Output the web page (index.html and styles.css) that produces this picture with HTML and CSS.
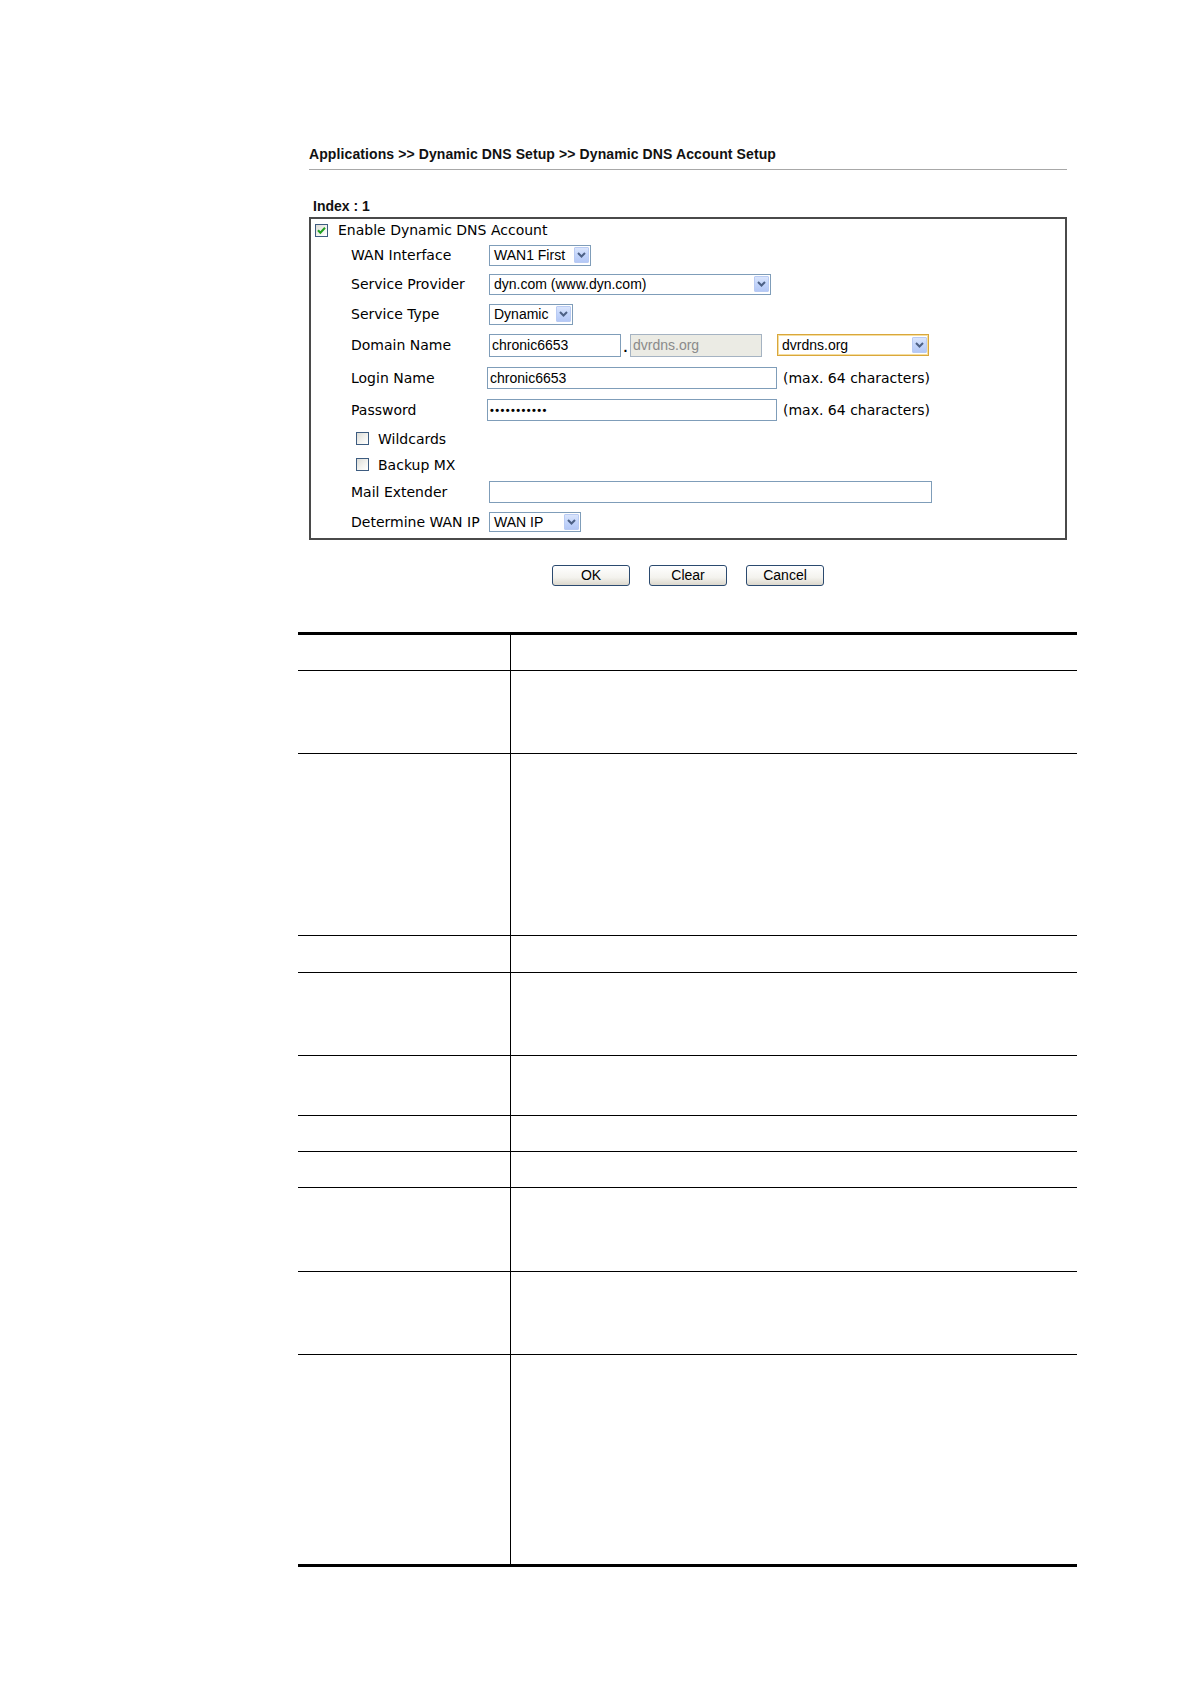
FILE: index.html
```html
<!DOCTYPE html>
<html lang="en">
<head>
<meta charset="utf-8">
<title>Dynamic DNS Account Setup</title>
<link rel="stylesheet" href="styles.css">
</head>
<body>
<div class="page">
  <div class="crumb">Applications &gt;&gt; Dynamic DNS Setup &gt;&gt; Dynamic DNS Account Setup</div>
  <div class="index-title">Index : 1</div>
  <div class="box">
    <div class="frow r1 enable-row">
      <span class="cb checked"><svg viewBox="0 0 13 13" width="13" height="13"><path d="M3 6.2 L5.4 8.8 L10 3.8" fill="none" stroke="#21a121" stroke-width="2"/></svg></span>
      <span class="cb-text">Enable Dynamic DNS Account</span>
    </div>
    <div class="frow r2">
      <span class="flabel">WAN Interface</span>
      <div class="sel w-wan"><span class="sel-text">WAN1 First</span><span class="arrow"><svg viewBox="0 0 15 16" width="15" height="16"><path d="M4 6 L7.5 9.5 L11 6" fill="none" stroke="#4d6185" stroke-width="2"/></svg></span></div>
    </div>
    <div class="frow r3">
      <span class="flabel">Service Provider</span>
      <div class="sel w-sp"><span class="sel-text">dyn.com (www.dyn.com)</span><span class="arrow"><svg viewBox="0 0 15 16" width="15" height="16"><path d="M4 6 L7.5 9.5 L11 6" fill="none" stroke="#4d6185" stroke-width="2"/></svg></span></div>
    </div>
    <div class="frow r4">
      <span class="flabel">Service Type</span>
      <div class="sel w-st"><span class="sel-text">Dynamic</span><span class="arrow"><svg viewBox="0 0 15 16" width="15" height="16"><path d="M4 6 L7.5 9.5 L11 6" fill="none" stroke="#4d6185" stroke-width="2"/></svg></span></div>
    </div>
    <div class="frow r5">
      <span class="flabel">Domain Name</span>
      <div class="inp w-dom1">chronic6653</div>
      <span class="dot">.</span>
      <div class="inp inp-disabled w-dom2">dvrdns.org</div>
      <div class="sel sel-focus w-dom3"><span class="sel-text">dvrdns.org</span><span class="arrow"><svg viewBox="0 0 15 16" width="15" height="16"><path d="M4 6 L7.5 9.5 L11 6" fill="none" stroke="#4d6185" stroke-width="2"/></svg></span></div>
    </div>
    <div class="frow r6">
      <span class="flabel">Login Name</span>
      <div class="inp w-long">chronic6653</div>
      <span class="hint">(max. 64 characters)</span>
    </div>
    <div class="frow r7">
      <span class="flabel">Password</span>
      <div class="inp w-long pw">&#8226;&#8226;&#8226;&#8226;&#8226;&#8226;&#8226;&#8226;&#8226;&#8226;&#8226;</div>
      <span class="hint">(max. 64 characters)</span>
    </div>
    <div class="frow r8 sub-cb">
      <span class="cb"></span>
      <span class="cb-text sub-text">Wildcards</span>
    </div>
    <div class="frow r9 sub-cb">
      <span class="cb"></span>
      <span class="cb-text sub-text">Backup MX</span>
    </div>
    <div class="frow r10">
      <span class="flabel">Mail Extender</span>
      <div class="inp w-mail"></div>
    </div>
    <div class="frow r11">
      <span class="flabel">Determine WAN IP</span>
      <div class="sel w-det"><span class="sel-text">WAN IP</span><span class="arrow"><svg viewBox="0 0 15 16" width="15" height="16"><path d="M4 6 L7.5 9.5 L11 6" fill="none" stroke="#4d6185" stroke-width="2"/></svg></span></div>
    </div>
  </div>
  <div class="buttons">
    <button class="btn" type="button">OK</button>
    <button class="btn" type="button">Clear</button>
    <button class="btn" type="button">Cancel</button>
  </div>

  <div class="spec">
    <div class="srow h1"><div class="c1"></div><div class="c2"></div></div>
    <div class="srow h2"><div class="c1"></div><div class="c2"></div></div>
    <div class="srow h3"><div class="c1"></div><div class="c2"></div></div>
    <div class="srow h4"><div class="c1"></div><div class="c2"></div></div>
    <div class="srow h5"><div class="c1"></div><div class="c2"></div></div>
    <div class="srow h6"><div class="c1"></div><div class="c2"></div></div>
    <div class="srow h7"><div class="c1"></div><div class="c2"></div></div>
    <div class="srow h8"><div class="c1"></div><div class="c2"></div></div>
    <div class="srow h9"><div class="c1"></div><div class="c2"></div></div>
    <div class="srow h10"><div class="c1"></div><div class="c2"></div></div>
    <div class="srow h11"><div class="c1"></div><div class="c2"></div></div>
  </div>
</div>
</body>
</html>
```

FILE: styles.css
```css
html, body {
  margin: 0;
  padding: 0;
  background: #ffffff;
}

.page {
  padding-top: 146px;
  font-family: "DejaVu Sans", Verdana, sans-serif;
  font-size: 14px;
  color: #000;
}

.crumb {
  margin-left: 309px;
  width: 758px;
  font-family: "Liberation Sans", Arial, sans-serif;
  font-weight: bold;
  font-size: 14px;
  letter-spacing: 0.1px;
  line-height: 16px;
  padding-bottom: 7px;
  border-bottom: 1px solid #a8a8a8;
  color: #111;
}

.index-title {
  margin-left: 313px;
  margin-top: 28px;
  font-family: "Liberation Sans", Arial, sans-serif;
  font-weight: bold;
  font-size: 14px;
  line-height: 16px;
  color: #111;
}

.box {
  margin-left: 309px;
  margin-top: 3px;
  width: 758px;
  box-sizing: border-box;
  border: 2px solid #4a4a4a;
}

.frow {
  display: flex;
  align-items: center;
  white-space: nowrap;
}

.r1 { height: 22px; }
.r2 { height: 28px; }
.r3 { height: 30px; }
.r4 { height: 30px; }
.r5 { height: 32px; }
.r6 { height: 33px; }
.r7 { height: 31px; }
.r8 { height: 27px; }
.r9 { height: 25px; }
.r10 { height: 29px; }
.r11 { height: 32px; }

.enable-row {
  padding-left: 4px;
}

.sub-cb {
  padding-left: 45px;
}

.cb {
  display: inline-block;
  width: 13px;
  height: 13px;
  box-sizing: border-box;
  border: 1px solid #3d5c80;
  background: linear-gradient(135deg, #dcdcd7 0%, #f4f4f1 60%, #ffffff 100%);
  position: relative;
}

.cb svg {
  position: absolute;
  left: -1px;
  top: -1px;
}

.cb-text {
  margin-left: 10px;
}

.sub-text {
  margin-left: 9px;
}

.flabel {
  width: 138px;
  padding-left: 40px;
  flex: none;
}

.sel {
  display: flex;
  align-items: center;
  justify-content: space-between;
  height: 21px;
  box-sizing: border-box;
  border: 1px solid #7f9db9;
  background: #fff;
  font-family: "Liberation Sans", Arial, sans-serif;
  font-size: 14px;
  flex: none;
}

.sel-text {
  padding-left: 4px;
  line-height: 19px;
}

.arrow {
  display: block;
  width: 15px;
  height: 16px;
  margin-right: 1px;
  box-sizing: border-box;
  border: 1px solid #b9cbf3;
  border-radius: 1px;
  background: linear-gradient(180deg, #dae5fc 0%, #c3d5fb 50%, #b4c8f6 100%);
  position: relative;
}

.arrow svg {
  position: absolute;
  left: -1px;
  top: -1px;
}

.sel-focus {
  border: 1px solid #d9a73c;
  box-shadow: inset 0 0 0 1px #f5dea0;
  height: 22px;
}

.w-wan { width: 102px; }
.w-sp { width: 282px; }
.w-st { width: 84px; }
.w-dom3 { width: 152px; margin-left: 15px; }
.w-det { width: 92px; height: 20px; }

.inp {
  height: 22px;
  box-sizing: border-box;
  border: 1px solid #7f9db9;
  background: #fff;
  font-family: "Liberation Sans", Arial, sans-serif;
  font-size: 14px;
  line-height: 20px;
  padding-left: 2px;
  flex: none;
}

.w-dom1 { width: 132px; height: 23px; }
.w-dom2 { width: 132px; height: 23px; }
.inp-disabled {
  background: #ebebe4;
  color: #8a8a8a;
  border-color: #a5b3c2;
}

.dot {
  width: 9px;
  text-align: center;
  font-family: "Liberation Sans", Arial, sans-serif;
  font-weight: bold;
  font-size: 14px;
  line-height: 20px;
  padding-top: 3px;
}

.w-long {
  width: 290px;
  margin-left: -2px;
}

.pw {
  font-size: 11px;
  letter-spacing: 1.4px;
  font-weight: bold;
  padding-left: 2px;
}

.hint {
  margin-left: 6px;
}

.w-mail { width: 443px; }

.buttons {
  margin-left: 309px;
  width: 758px;
  margin-top: 25px;
  display: flex;
  justify-content: center;
  gap: 19px;
}

.btn {
  width: 78px;
  height: 21px;
  box-sizing: border-box;
  border: 1px solid #2b4a6f;
  border-radius: 3px;
  background: linear-gradient(180deg, #ffffff 0%, #f4f3ee 60%, #dcd8cd 100%);
  font-family: "Liberation Sans", Arial, sans-serif;
  font-size: 14px;
  line-height: 17px;
  color: #000;
  padding: 0;
}

.spec {
  margin-left: 298px;
  margin-top: 46px;
  width: 779px;
  border-top: 3px solid #000;
  border-bottom: 3px solid #000;
}

.srow {
  display: flex;
  border-bottom: 1px solid #000;
}

.srow:last-child {
  border-bottom: none;
}

.c1 {
  width: 212px;
  border-right: 1px solid #000;
  flex: none;
}

.c2 {
  flex: 1;
}

.h1 { height: 35px; }
.h2 { height: 82px; }
.h3 { height: 181px; }
.h4 { height: 36px; }
.h5 { height: 82px; }
.h6 { height: 59px; }
.h7 { height: 35px; }
.h8 { height: 35px; }
.h9 { height: 83px; }
.h10 { height: 82px; }
.h11 { height: 209px; }
```
